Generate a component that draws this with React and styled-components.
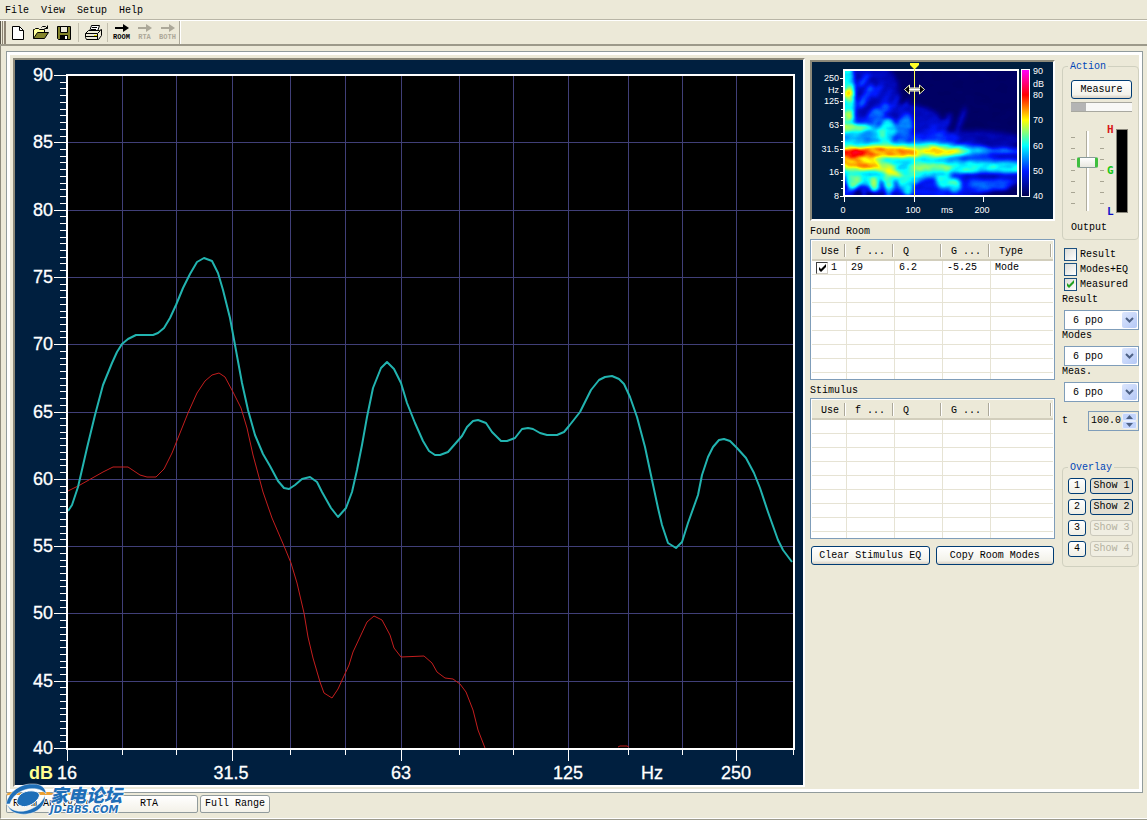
import { useState } from 'react';
import styled, { createGlobalStyle, css } from 'styled-components';

const DB_LABELS = [90, 85, 80, 75, 70, 65, 60, 55, 50, 45, 40];
const GRID_X = [122, 176, 232, 290, 345, 401, 459, 513, 568, 628, 682, 736];
const MAJOR_X = [67, 232, 401, 568, 736];
const HZ_LABELS = [
  [67, '16'],
  [231, '31.5'],
  [401, '63'],
  [568, '125'],
  [652, 'Hz'],
  [736, '250'],
];

const MEASURED =
  '68,511 72,505 78,487 87,448 95,415 103,385 112,363 117,352 122,344 128,339 136,335 153,335 158,333 164,328 170,318 176,305 183,288 190,274 197,262 204,258 212,261 218,273 223,290 230,318 235,345 242,383 248,410 255,435 263,454 270,466 278,481 284,488 289,489 295,485 302,479 310,477 317,482 322,492 331,508 338,517 346,508 352,492 357,470 362,445 367,417 373,388 381,368 387,362 394,369 401,383 407,403 415,423 423,441 429,451 435,455 440,455 448,452 455,444 462,436 467,427 473,421 478,420 486,423 492,432 501,441 507,441 515,438 522,429 528,428 533,429 540,433 547,435 557,435 564,432 569,426 580,412 591,390 599,380 605,377 612,376 619,379 624,384 630,397 637,417 645,447 652,480 658,508 662,525 668,543 676,548 682,542 688,523 698,495 702,475 708,457 713,447 719,440 724,439 730,441 737,448 746,458 754,473 760,488 768,512 778,540 783,550 792,562';
const MODES =
  '68,491 80,485 103,472 113,467 128,467 140,475 147,477 156,477 164,469 172,453 178,438 188,413 197,393 205,381 212,375 219,373 225,377 233,392 241,408 247,428 253,455 263,492 272,518 284,546 291,563 297,583 304,613 308,637 313,658 320,682 324,693 332,698 338,689 349,665 353,652 367,622 374,616 382,620 390,635 394,648 401,657 424,656 432,663 437,672 445,678 453,679 460,684 466,692 473,710 478,730 485,748';

const SPEC_Y = [
  ['250', 78],
  ['Hz', 90],
  ['125', 101],
  ['63', 125],
  ['31.5', 149],
  ['16', 172],
  ['8', 196],
];
const SPEC_MINOR = [86, 93, 109, 117, 133, 141, 157, 164, 180, 188];
const SPEC_X = [
  ['0', 843],
  ['100', 913],
  ['ms', 947],
  ['200', 982],
];
const SCALE = [
  ['90', 71],
  ['dB', 84],
  ['80', 95],
  ['70', 120],
  ['60', 146],
  ['50', 171],
  ['40', 196],
];

// [cx, cy, rx, ry, level, rotation], painted from cold to hot
const BLOBS = [
  [14, 34, 40, 48, 0.13, 30],
  [62, 56, 38, 22, 0.14, 0],
  [128, 70, 50, 10, 0.12, 0],
  [88, 58, 5, 12, 0.17, 25],
  [102, 54, 4, 12, 0.17, 25],
  [117, 50, 3, 14, 0.15, 20],
  [87, 100, 100, 28, 0.19, 0],
  [90, 68, 26, 7, 0.22, 0],
  [60, 58, 8, 16, 0.28, 15],
  [36, 44, 5, 14, 0.28, 35],
  [22, 26, 4, 14, 0.26, 30],
  [28, 44, 3, 10, 0.26, 35],
  [34, 20, 3, 9, 0.22, 35],
  [42, 28, 2, 10, 0.2, 35],
  [50, 34, 2, 12, 0.2, 35],
  [60, 36, 2, 10, 0.17, 35],
  [20, 10, 3, 9, 0.24, 35],
  [16, 52, 14, 4, 0.2, 0],
  [18, 66, 32, 11, 0.36, 0],
  [3, 30, 8, 40, 0.4, 0],
  [44, 60, 8, 12, 0.38, 0],
  [5, 24, 5, 6, 0.58, 0],
  [4, 46, 5, 5, 0.52, 0],
  [8, 57, 20, 3, 0.6, 0],
  [38, 62, 4, 6, 0.45, 0],
  [16, 68, 20, 5, 0.32, 0],
  [60, 82, 90, 10, 0.37, 0],
  [172, 81, 34, 3, 0.3, 0],
  [44, 97, 58, 11, 0.38, 4],
  [30, 104, 38, 13, 0.4, 12],
  [62, 104, 18, 12, 0.42, 0],
  [100, 110, 8, 9, 0.42, 0],
  [111, 115, 6, 7, 0.43, 0],
  [138, 112, 14, 9, 0.25, 0],
  [156, 114, 12, 7, 0.24, 0],
  [64, 116, 5, 10, 0.4, 0],
  [44, 116, 4, 11, 0.44, 0],
  [39, 118, 2, 9, 0.14, -20],
  [53, 118, 2, 9, 0.16, -10],
  [76, 118, 4, 9, 0.2, 10],
  [10, 110, 7, 10, 0.5, 20],
  [30, 114, 4, 8, 0.53, 0],
  [20, 121, 3, 6, 0.2, 0],
  [4, 122, 8, 4, 0.2, 0],
  [144, 87, 42, 4, 0.22, -5],
  [160, 86, 16, 3, 0.14, 0],
  [124, 97, 62, 6, 0.42, 0],
  [162, 97, 24, 6, 0.41, 0],
  [150, 106, 32, 3, 0.12, 0],
  [86, 97, 22, 4, 0.52, 0],
  [58, 81, 70, 6, 0.52, 0],
  [70, 81, 46, 5, 0.6, 0],
  [36, 82, 46, 6, 0.66, 0],
  [18, 94, 34, 7, 0.56, 6],
  [44, 100, 15, 4, 0.55, 25],
  [12, 93, 24, 5, 0.67, 4],
  [12, 83, 40, 4, 0.74, -2],
  [4, 83, 18, 4, 0.8, 0],
  [4, 94, 7, 3, 0.71, 0],
];

const ROWS = [['1', '29', '6.2', '-5.25', 'Mode']];

export default function App() {
  return (
    <Window>
      <GlobalStyle />
      <MenuBar>
        {['File', 'View', 'Setup', 'Help'].map((item) => (
          <MenuItem key={item}>{item}</MenuItem>
        ))}
      </MenuBar>
      <Toolbar />
      <Body>
        <Panel>
          <Sunken>
            <ResponseChart />
          </Sunken>
          <Middle>
            <Sunken>
              <Spectrogram />
            </Sunken>
            <Caption>Found Room</Caption>
            <FilterTable label="Found Room" rows={ROWS} lastColumn="Type" />
            <Caption>Stimulus</Caption>
            <FilterTable label="Stimulus" rows={[]} lastColumn="" />
            <ButtonRow>
              <XpButton>Clear Stimulus EQ</XpButton>
              <XpButton>Copy Room Modes</XpButton>
            </ButtonRow>
          </Middle>
          <Controls />
        </Panel>
        <Tabs role="tablist">
          <Tab role="tab" aria-selected="true" $active>
            Room Analyzer
          </Tab>
          <Tab role="tab" $wide>
            RTA
          </Tab>
          <Tab role="tab">Full Range</Tab>
          <Watermark />
        </Tabs>
      </Body>
    </Window>
  );
}

function Toolbar() {
  return (
    <ToolbarRow>
      <Grip />
      <ToolButton aria-label="New">
        <svg width="18" height="18" viewBox="0 0 18 18">
          <path d="M3.500 2.500h7l4 4v9h-11z" fill="#fff" stroke="#000" />
          <path d="M10.500 2.500v4h4" fill="none" stroke="#000" />
        </svg>
      </ToolButton>
      <ToolButton aria-label="Open">
        <svg width="18" height="18" viewBox="0 0 18 18">
          <path d="M1.500 14.500v-9h1l1-1h3l1 1h5v3" fill="#ffff9c" stroke="#000" />
          <path d="M1.500 14.500l4-6h11l-4 6z" fill="#84842a" stroke="#000" />
          <path d="M9.500 3.500l1-1h3l2 2M15.500 1.500v3h-3" fill="none" stroke="#000" />
        </svg>
      </ToolButton>
      <ToolButton aria-label="Save">
        <svg width="18" height="18" viewBox="0 0 18 18">
          <path d="M2.500 2.500h13v13h-12l-1-1z" fill="#84842a" stroke="#000" />
          <path d="M5.500 2.500h7v6h-7z" fill="#ece9d8" stroke="#000" />
          <path d="M5 11h8v4H5z" fill="#000" />
          <path d="M10 12h2v3h-2z" fill="#fff" />
        </svg>
      </ToolButton>
      <Separator />
      <ToolButton aria-label="Print">
        <svg width="18" height="18" viewBox="0 0 18 18">
          <path d="M5.500 7.500l2-6h8l-2 6z" fill="#fff" stroke="#000" />
          <path d="M8 3.500h5M7 5.500h5" stroke="#000" />
          <path d="M1.500 9.500l3-3h11l2-1v6l-3 4h-12l-1-2z" fill="#ece9d8" stroke="#000" />
          <path d="M1.500 9.500h12v6M13.500 9.500l3-3M2 12.500h11" fill="none" stroke="#000" />
          <path d="M10 11h3v1h-3z" fill="#e8e000" />
        </svg>
      </ToolButton>
      <Separator />
      <ModeButton label="ROOM" />
      <ModeButton label="RTA" disabled />
      <ModeButton label="BOTH" disabled />
      <ToolbarEnd />
    </ToolbarRow>
  );
}

function ModeButton({ label, disabled }) {
  return (
    <ToolButton disabled={disabled}>
      <svg width="14" height="8" viewBox="0 0 14 8">
        <path d="M0 3h8V0l6 4-6 4V5H0z" fill="currentColor" />
      </svg>
      <span>{label}</span>
    </ToolButton>
  );
}

function ResponseChart() {
  const ticks = Array.from({ length: 101 }, (_, i) => i);
  return (
    <ChartSvg viewBox="15 60 788 725" role="img" aria-label="Frequency response">
      <rect x="67" y="75" width="727" height="674" fill="#000" />
      <g stroke="#403f78" shapeRendering="crispEdges">
        {DB_LABELS.slice(1, -1).map((db) => {
          const y = Math.round(75 + (90 - db) * 13.46);
          return <path key={db} d={`M68 ${y + 0.5}H793`} />;
        })}
        {GRID_X.map((x) => (
          <path key={x} d={`M${x + 0.5} 76V748`} />
        ))}
      </g>
      <polyline points={MODES} fill="none" stroke="#c41e1e" />
      <path d="M618 747l2-1h7l2 1" fill="none" stroke="#c41e1e" />
      <polyline points={MEASURED} fill="none" stroke="#22b4b0" strokeWidth="2" strokeLinejoin="round" />
      <g stroke="#fff" shapeRendering="crispEdges">
        {ticks.map((i) => {
          const y = Math.round(75 + i * 6.73) + 0.5;
          return <path key={i} d={`M${i % 10 ? 60 : 54} ${y}H67`} />;
        })}
        {[...GRID_X, 67, 793].map((x) => (
          <path key={x} d={`M${x + 0.5} 749V${MAJOR_X.includes(x) ? 761 : 755}`} />
        ))}
        <rect x="67" y="75" width="727" height="674" fill="none" strokeWidth="2" />
      </g>
      <AxisText textAnchor="end">
        {DB_LABELS.map((db) => (
          <text key={db} x="53" y={Math.round(81 + (90 - db) * 13.46)}>
            {db}
          </text>
        ))}
      </AxisText>
      <AxisText textAnchor="middle">
        {HZ_LABELS.map(([x, label]) => (
          <text key={label} x={x} y="779">
            {label}
          </text>
        ))}
      </AxisText>
      <UnitText x="29" y="779">
        dB
      </UnitText>
    </ChartSvg>
  );
}

function Spectrogram() {
  return (
    <ChartSvg viewBox="812 62 241 157" role="img" aria-label="Decay spectrogram">
      <defs>
        <filter id="heat" x="0" y="0" width="174" height="126" filterUnits="userSpaceOnUse" colorInterpolationFilters="sRGB">
          <feGaussianBlur in="SourceGraphic" stdDeviation="2" result="soft" />
          <feTurbulence type="fractalNoise" baseFrequency="0.06 0.1" numOctaves="2" seed="7" />
          <feColorMatrix values="2 0 0 0 -0.5  2 0 0 0 -0.5  2 0 0 0 -0.5  0 0 0 0 1" result="noise" />
          <feComposite in="soft" in2="noise" operator="arithmetic" k1="0.25" k2="0.86" k3="0" k4="0" />
          <feColorMatrix values="1 0 0 0 0  0 1 0 0 0  0 0 1 0 0  0 0 0 0 1" />
          <feComponentTransfer>
            <feFuncR type="table" tableValues="0 0 0 0 0 0.5 1 1 1 1 1" />
            <feFuncG type="table" tableValues="0 0 0.1 0.55 1 1 1 0.5 0 0 0" />
            <feFuncB type="table" tableValues="0.3 0.6 1 1 1 0.5 0 0 0 0.5 1" />
          </feComponentTransfer>
        </filter>
        <linearGradient id="scale" x1="0" y1="1" x2="0" y2="0">
          <stop offset="0" stopColor="#00004c" />
          <stop offset="0.2" stopColor="#001aff" />
          <stop offset="0.4" stopColor="#00ffff" />
          <stop offset="0.5" stopColor="#80ff80" />
          <stop offset="0.6" stopColor="#ffff00" />
          <stop offset="0.8" stopColor="#ff0000" />
          <stop offset="1" stopColor="#ff00ff" />
        </linearGradient>
      </defs>
      <g transform="translate(844 70)">
        <g filter="url(#heat)">
          <rect width="174" height="126" fill="rgb(8,8,8)" />
          {BLOBS.map(([cx, cy, rx, ry, level, angle], i) => {
            const v = Math.round(level * 255);
            return (
              <ellipse key={i} cx={cx} cy={cy} rx={rx} ry={ry} fill={`rgb(${v},${v},${v})`} transform={`rotate(${angle} ${cx} ${cy})`} />
            );
          })}
        </g>
      </g>
      <g stroke="#fff" shapeRendering="crispEdges">
        {SPEC_Y.filter(([label]) => label !== 'Hz').map(([label, y]) => (
          <path key={label} d={`M840 ${y + 0.5}H844`} />
        ))}
        {SPEC_MINOR.map((y) => (
          <path key={y} d={`M841 ${y + 0.5}H844`} />
        ))}
        {[844, 914, 983].map((x) => (
          <path key={x} d={`M${x + 0.5} 196V202`} />
        ))}
        <rect x="844" y="70" width="174" height="126" fill="none" strokeWidth="2" />
        <rect x="1021.500" y="69.500" width="8" height="127" fill="url(#scale)" />
      </g>
      <path d="M914.500 69V196" stroke="#ffff50" shapeRendering="crispEdges" />
      <path d="M910 63h9v2l-4 4h-1l-4-4z" fill="#ffff28" />
      <path d="M904.500 89.500l5-4.500v3h10v-3l5 4.500-5 4.500v-3h-10v3z" fill="#000" stroke="#ffffc8" />
      <path d="M909 89.500h11" stroke="#fff" strokeWidth="2" />
      <SmallText textAnchor="end">
        {SPEC_Y.map(([label, y]) => (
          <text key={label} x="839" y={y + 3}>
            {label}
          </text>
        ))}
      </SmallText>
      <SmallText textAnchor="middle">
        {SPEC_X.map(([label, x]) => (
          <text key={label} x={x} y="213">
            {label}
          </text>
        ))}
      </SmallText>
      <SmallText>
        {SCALE.map(([label, y]) => (
          <text key={label} x="1033" y={y + 3}>
            {label}
          </text>
        ))}
      </SmallText>
    </ChartSvg>
  );
}

function FilterTable({ label, rows, lastColumn }) {
  const [used, setUsed] = useState(true);
  const blank = Array.from({ length: 9 - rows.length }, (_, i) => i);
  return (
    <TableFrame>
      <Table aria-label={label}>
        <colgroup>
          <col width="35" />
          <col width="48" />
          <col width="48" />
          <col width="48" />
          <col />
        </colgroup>
        <thead>
          <tr>
            <th>Use</th>
            <th>f ...</th>
            <th>Q</th>
            <th>G ...</th>
            <th>{lastColumn}</th>
          </tr>
        </thead>
        <tbody>
          {rows.map(([id, ...cells]) => (
            <tr key={id}>
              <td>
                <UseLabel>
                  <UseBox>
                    <input type="checkbox" checked={used} onChange={() => setUsed(!used)} />
                    {used && <Tick color="#000" />}
                  </UseBox>
                  {id}
                </UseLabel>
              </td>
              {cells.map((cell) => (
                <td key={cell}>{cell}</td>
              ))}
            </tr>
          ))}
          {blank.map((i) => (
            <tr key={i}>
              <td />
              <td />
              <td />
              <td />
              <td />
            </tr>
          ))}
        </tbody>
      </Table>
    </TableFrame>
  );
}

function Tick({ color }) {
  return (
    <svg width="9" height="9" viewBox="0 0 9 9">
      <path d="M1 3v3l2 2 5-5V0L3 5z" fill={color} />
    </svg>
  );
}

function Controls() {
  const [shown, setShown] = useState({ Result: false, 'Modes+EQ': false, Measured: true });
  const [level, setLevel] = useState(63);
  const [time, setTime] = useState('100.0');
  const step = (by) => setTime((Number(time) + by).toFixed(1));

  return (
    <Side>
      <Group>
        <legend>Action</legend>
        <ActionBody>
          <XpButton>Measure</XpButton>
          <Progress>
            <span />
          </Progress>
          <Levels>
            <Ticks />
            <Slider type="range" aria-label="Output" value={level} onChange={(e) => setLevel(e.target.value)} />
            <Ticks />
            <Marks>
              <Mark $color="#d81818">H</Mark>
              <Mark $color="#18c818">G</Mark>
              <Mark $color="#1010c8">L</Mark>
            </Marks>
            <Meter />
          </Levels>
          <Output>Output</Output>
        </ActionBody>
      </Group>
      <Checks>
        {Object.keys(shown).map((name) => (
          <CheckLabel key={name}>
            <XpBox>
              <input
                type="checkbox"
                checked={shown[name]}
                onChange={() => setShown({ ...shown, [name]: !shown[name] })}
              />
              {shown[name] && <Tick color="#21a121" />}
            </XpBox>
            {name}
          </CheckLabel>
        ))}
      </Checks>
      {['Result', 'Modes', 'Meas.'].map((name) => (
        <Field key={name}>
          {name}
          <SelectBox>
            <select defaultValue="6">
              <option value="3">3 ppo</option>
              <option value="6">6 ppo</option>
              <option value="12">12 ppo</option>
            </select>
            <DropArrow>
              <svg width="9" height="6" viewBox="0 0 9 6">
                <path d="M1 1l3.500 3.500L8 1" fill="none" stroke="#4d6185" strokeWidth="2" />
              </svg>
            </DropArrow>
          </SelectBox>
        </Field>
      ))}
      <TimeRow>
        <label htmlFor="time">t</label>
        <Spin>
          <input id="time" value={time} onChange={(e) => setTime(e.target.value)} />
          <SpinButtons>
            <button aria-label="Increase" onClick={() => step(1)}>
              <svg width="7" height="4" viewBox="0 0 7 4">
                <path d="M0 4l3.500-4L7 4z" fill="#4d6185" />
              </svg>
            </button>
            <button aria-label="Decrease" onClick={() => step(-1)}>
              <svg width="7" height="4" viewBox="0 0 7 4">
                <path d="M0 0l3.500 4L7 0z" fill="#4d6185" />
              </svg>
            </button>
          </SpinButtons>
        </Spin>
      </TimeRow>
      <Group>
        <legend>Overlay</legend>
        <OverlayGrid>
          {[1, 2, 3, 4].map((n) => (
            <OverlayRow key={n}>
              <OverlayButton>{n}</OverlayButton>
              <OverlayButton $pressed={n < 3} disabled={n > 2}>
                Show {n}
              </OverlayButton>
            </OverlayRow>
          ))}
        </OverlayGrid>
      </Group>
    </Side>
  );
}

function Watermark() {
  return (
    <Brand>
      <svg width="44" height="32" viewBox="0 0 44 32">
        <path d="M34 9h10v2H35zM2 10l7-2-3 4z" fill="#f0a030" />
        <path
          d="M0 21C3 7 16 0 28 1c7 0 12 4 12 10-4-5-11-6-18-5C12 8 6 14 4 21z"
          fill="#1f6fb8"
          stroke="#fff"
          strokeWidth="0.5"
        />
        <path d="M11 17c2-7 9-10 17-9 6 1 7 5 3 9-4 5-12 8-16 6-3-1-5-3-4-6z" fill="#1f6fb8" stroke="#fff" />
        <path
          d="M1 21c4 8 15 9 24 5 7-3 12-8 14-14 1 10-7 18-18 19C11 32 3 29 1 21z"
          fill="#1f6fb8"
          stroke="#fff"
          strokeWidth="0.5"
        />
      </svg>
      <BrandText>
        <b>家电论坛</b>
        <i>JD-BBS.COM</i>
      </BrandText>
    </Brand>
  );
}

const GlobalStyle = createGlobalStyle`
  * {
    box-sizing: border-box;
  }

  body {
    margin: 0;
    background: #ece9d8;
  }

  body, button, input, select {
    font-family: 'Liberation Mono', 'Noto Sans CJK SC', monospace;
    font-size: 10px;
    line-height: 12px;
    color: #000;
  }
`;

const Window = styled.div`
  min-height: 100vh;
  display: flex;
  flex-direction: column;
  border-bottom: 1px solid #9c9a8c;
`;

const MenuBar = styled.nav`
  height: 20px;
  padding: 2px 0 0 5px;
  display: flex;
  align-items: center;
  gap: 12px;
  border-bottom: 1px solid #b8b5a6;
`;

const MenuItem = styled.button`
  padding: 0;
  border: 0;
  background: none;
`;

const ToolbarRow = styled.div`
  height: 26px;
  display: flex;
  align-items: stretch;
  border-top: 1px solid #fff;
  border-bottom: 2px solid #9c998a;
`;

const Grip = styled.span`
  width: 6px;
  background: linear-gradient(90deg, #5c584c 0 1px, #ece9d8 1px 2px, #8d8474 2px 3px, #ece9d8 3px 4px, #8d8474 4px 6px);
`;

const ToolButton = styled.button`
  width: 23px;
  padding: 0;
  border: 0;
  background: none;
  display: flex;
  flex-direction: column;
  align-items: center;
  justify-content: center;
  gap: 1px;

  &:disabled {
    color: #aca899;
  }

  & span {
    font-size: 7px;
    font-weight: bold;
    line-height: 8px;
  }
`;

const Separator = styled.span`
  width: 1px;
  margin: 2px 2px 2px 3px;
  background: #c2bfae;
`;

const ToolbarEnd = styled.span`
  width: 2px;
  border-left: 1px solid #aca899;
  border-right: 1px solid #fff;
`;

const Body = styled.main`
  flex: 1;
  padding: 5px 4px 0 5px;
  border-left: 1px solid #8e8b7d;
  border-bottom: 1px solid #fff;
`;

const Panel = styled.div`
  padding: 6px 3px 5px 6px;
  display: flex;
  align-items: flex-start;
  border: 1px solid #919b9c;
  box-shadow: inset 0 0 0 3px #fff;

  & > :first-child {
    flex: 1;
    min-width: 0;
  }
`;

const Sunken = styled.div`
  background: #001f3f;
  border: 2px solid;
  border-color: #8c897a #fff #fff #8c897a;
`;

const ChartSvg = styled.svg`
  display: block;
  width: 100%;
  height: auto;
`;

const AxisText = styled.g`
  font: 18px 'Liberation Sans', sans-serif;
  fill: #fff;
  stroke: #fff;
  stroke-width: 0.3px;
`;

const UnitText = styled.text`
  font: bold 18px 'Liberation Sans', sans-serif;
  fill: #ffff90;
`;

const SmallText = styled.g`
  font: 9px 'Liberation Sans', sans-serif;
  fill: #fff;
`;

const Middle = styled.section`
  width: 245px;
  margin: 2px 7px 0 5px;
`;

const Caption = styled.h2`
  height: 18px;
  margin: 0;
  padding-top: 2px;
  font-size: 10px;
  font-weight: normal;
  line-height: 18px;
`;

const TableFrame = styled.div`
  height: 141px;
  padding: 1px;
  overflow: hidden;
  background: #fff;
  border: 1px solid #7f9db9;
`;

const Table = styled.table`
  width: 100%;
  table-layout: fixed;
  border-spacing: 0;

  & th {
    height: 20px;
    padding: 3px 0 0 8px;
    font-weight: normal;
    text-align: left;
    white-space: nowrap;
    background: linear-gradient(90deg, transparent calc(100% - 3px), #aca899 0 calc(100% - 2px), #fff 0 calc(100% - 1px), transparent 0) 0 3px / 100% 13px no-repeat #ece9d8;
    border-bottom: 2px solid #d2cebc;
  }

  & th:first-child {
    padding-left: 9px;
  }

  & td {
    height: 14px;
    padding: 1px 0 0 4px;
    border-right: 1px solid #e6e3d4;
    border-bottom: 1px solid #e6e3d4;
  }

  & td:last-child {
    border-right: 0;
  }
`;

const boxInput = css`
  position: relative;
  display: flex;

  & input {
    appearance: none;
    width: 100%;
    height: 100%;
    margin: 0;
  }

  & svg {
    position: absolute;
    inset: 0;
    margin: auto;
  }
`;

const UseLabel = styled.label`
  display: flex;
  align-items: center;
  gap: 3px;
`;

const UseBox = styled.span`
  ${boxInput}
  width: 12px;
  height: 12px;
  border: 1px solid;
  border-color: #404040 #d4d0c8 #d4d0c8 #404040;
`;

const ButtonRow = styled.div`
  margin-top: 7px;
  padding: 0 1px;
  display: flex;
  gap: 6px;

  & > button {
    flex: 1 1 0;
  }
`;

const XpButton = styled.button`
  height: 19px;
  padding: 1px 5px 0;
  white-space: nowrap;
  border: 1px solid #003c74;
  border-radius: 3px;
  background: linear-gradient(#fff, #f3f2ea 80%, #d8d0c4);
`;

const Side = styled.aside`
  width: 77px;
  margin-top: 2px;
`;

const Group = styled.fieldset`
  min-width: 0;
  margin: 0;
  padding: 0 5px 5px;
  border: 1px solid #d0d0bf;
  border-radius: 4px;

  & legend {
    padding: 1px 2px 0;
    color: #0046b8;
  }
`;

const ActionBody = styled.div`
  padding: 7px 1px 0 3px;
  display: flex;
  flex-direction: column;
`;

const Progress = styled.div`
  height: 10px;
  margin: 3px 0 17px;
  border: 1px solid #a8a8a0;
  border-width: 1px 0;
  background: #f8f8f6;

  & span {
    display: block;
    width: 15px;
    height: 100%;
    background: #b4b4b4;
  }
`;

const Levels = styled.div`
  height: 84px;
  display: flex;
  align-items: center;
`;

const Ticks = styled.span`
  width: 4px;
  height: 69px;
  background: repeating-linear-gradient(#a8a593 0 1px, transparent 1px 11px);
`;

const Slider = styled.input`
  appearance: none;
  writing-mode: vertical-lr;
  direction: rtl;
  width: 21px;
  height: 80px;
  margin: 0 2px;
  background: linear-gradient(90deg, transparent 9px, #b0ad9e 9px 10px, #fff 10px 12px, transparent 12px);

  &::-webkit-slider-thumb {
    appearance: none;
    width: 21px;
    height: 11px;
    border: 1px solid #8a9a9a;
    border-left: 3px solid #3fbf3f;
    border-right: 3px solid #3fbf3f;
    border-radius: 2px;
    background: linear-gradient(#fff, #e8e8e0);
  }
`;

const Marks = styled.div`
  height: 94px;
  margin: 0 2px 0 3px;
  display: flex;
  flex-direction: column;
  justify-content: space-between;
`;

const Mark = styled.b`
  font-family: 'DejaVu Sans Mono', monospace;
  font-size: 11px;
  color: ${({ $color }) => $color};
`;

const Meter = styled.div`
  width: 12px;
  height: 84px;
  background: #000;
  border: 1px solid #88857a;
`;

const Output = styled.p`
  margin: 9px 0 0;
`;

const Checks = styled.div`
  padding: 7px 0 2px 2px;
`;

const CheckLabel = styled.label`
  height: 15px;
  display: flex;
  align-items: center;
  gap: 3px;
`;

const XpBox = styled.span`
  ${boxInput}
  width: 13px;
  height: 13px;
  border: 1px solid #1c5180;
  background: linear-gradient(135deg, #dcdcd7, #fff);
`;

const Field = styled.label`
  height: 36px;
  display: flex;
  flex-direction: column;
  gap: 4px;
`;

const SelectBox = styled.span`
  position: relative;
  margin-left: 2px;
  display: flex;

  & select {
    appearance: none;
    width: 100%;
    height: 20px;
    padding: 1px 0 0 8px;
    border: 1px solid #7f9db9;
    border-radius: 0;
    background: #fff;
  }
`;

const DropArrow = styled.span`
  position: absolute;
  top: 2px;
  right: 2px;
  bottom: 2px;
  width: 15px;
  display: flex;
  align-items: center;
  justify-content: center;
  border-radius: 2px;
  background: linear-gradient(135deg, #dce6fd, #b4c8f6);
  pointer-events: none;
`;

const TimeRow = styled.div`
  margin: 9px 0 30px;
  display: flex;
  align-items: center;
  justify-content: space-between;
`;

const Spin = styled.span`
  width: 51px;
  height: 20px;
  padding: 1px;
  display: flex;
  border: 1px solid #7f9db9;

  & input {
    flex: 1;
    min-width: 0;
    padding: 0 0 0 1px;
    border: 0;
    background: none;
  }
`;

const SpinButtons = styled.span`
  width: 15px;
  display: flex;
  flex-direction: column;

  & button {
    flex: 1;
    padding: 0;
    display: flex;
    align-items: center;
    justify-content: center;
    border: 1px solid #e8eefc;
    border-radius: 2px;
    background: #c1d3fb;
  }
`;

const OverlayGrid = styled.div`
  padding: 4px 0;
  display: flex;
  flex-direction: column;
  gap: 5px;
`;

const OverlayRow = styled.div`
  display: grid;
  grid-template-columns: 18px 1fr;
  gap: 4px;
`;

const OverlayButton = styled(XpButton)`
  height: 16px;
  padding: 0;
  background: ${({ $pressed }) => ($pressed ? '#e2dfd2' : 'linear-gradient(#fff, #f0efe6)')};

  &:disabled {
    color: #b4b1a0;
    border-color: #cac8bb;
    background: #f0eee2;
  }
`;

const Tabs = styled.div`
  position: relative;
  padding-bottom: 5px;
  display: flex;
  align-items: center;
  gap: 2px;
`;

const Tab = styled.button`
  height: 18px;
  margin-top: 2px;
  padding: 0 ${({ $wide }) => ($wide ? 39 : 4)}px;
  border: 1px solid #919b9c;
  border-radius: 3px 3px 2px 2px;
  background: linear-gradient(#fff, #f3f1e8);

  ${({ $active }) =>
    $active &&
    css`
      height: 20px;
      margin-top: 0;
      padding: 0 6px;
      border-top: 2px solid #e8a33d;
    `}
`;

const Brand = styled.div`
  position: absolute;
  left: 0;
  top: -10px;
  display: flex;
  pointer-events: none;
`;

const BrandText = styled.div`
  display: flex;
  flex-direction: column;
  font-family: 'DejaVu Sans', 'Noto Sans CJK SC', sans-serif;
  font-style: italic;
  font-weight: bold;
  color: #1f6fb8;
  text-shadow: 1px 0 #fff, -1px 0 #fff, 0 1px #fff, 0 -1px #fff;

  & b {
    font-family: 'Noto Sans CJK SC', sans-serif;
    font-size: 18px;
    font-weight: 900;
    line-height: 22px;
  }

  & i {
    font-size: 10px;
    line-height: 9px;
  }
`;
